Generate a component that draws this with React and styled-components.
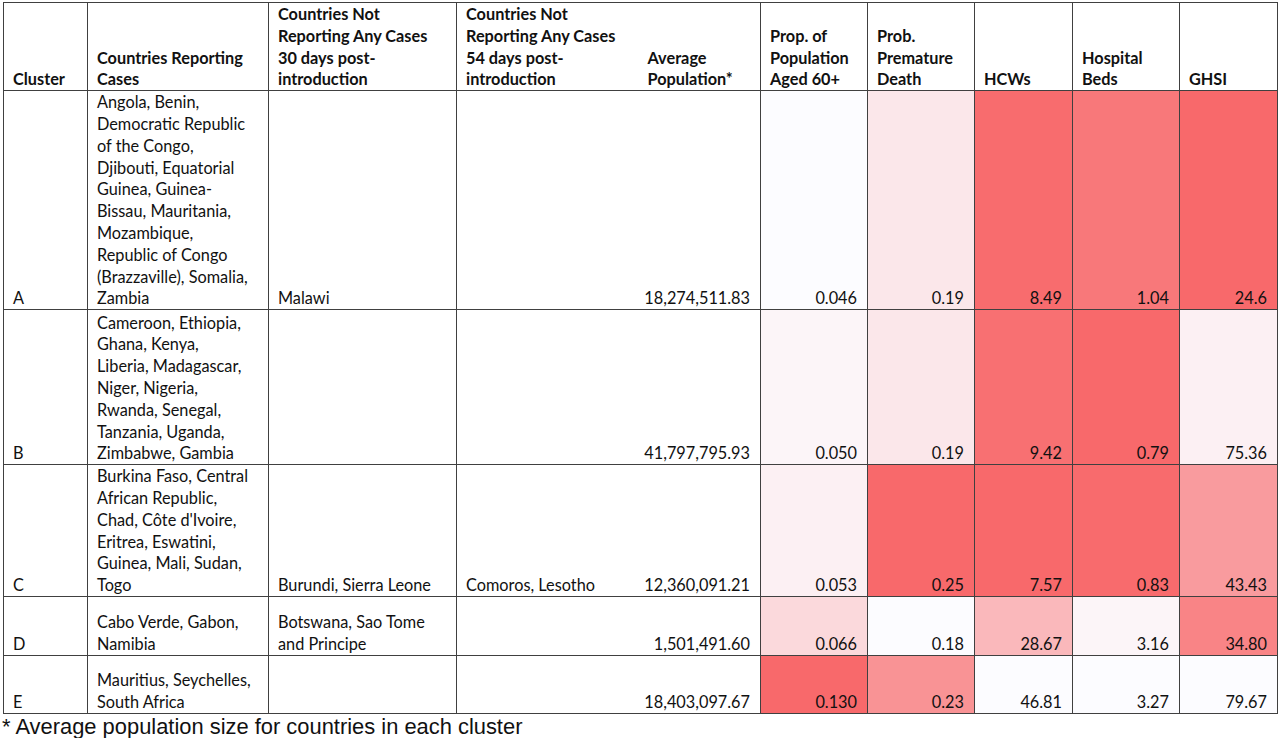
import styled, { createGlobalStyle } from "styled-components";

const GlobalStyle = createGlobalStyle`
  body {
    margin: 0;
    background: #ffffff;
  }
`

const Page = styled.div`
  padding: 2px 0 0 3px;
  width: 1280px;
  height: 738px;
  box-sizing: border-box;
  overflow: hidden;
`

const Table = styled.table`
  border-collapse: collapse;
  table-layout: fixed;
  width: 1275px;
  font-family: Lato, "Liberation Sans", sans-serif;
  font-size: 16.3px;
  line-height: 21.8px;
  color: #111;
`

const HeadCell = styled.th`
  border: 1px solid #404040;
  border-right: ${p => (p.$open ? "hidden" : "1px solid #404040")};
  vertical-align: bottom;
  text-align: left;
  font-weight: 700;
  padding: 0 4px 0 9px;
  white-space: nowrap;
  height: 87px;
  box-sizing: border-box;
`

const Cell = styled.td`
  border: 1px solid #404040;
  border-right: ${p => (p.$open ? "hidden" : "1px solid #404040")};
  vertical-align: bottom;
  text-align: ${p => (p.$num ? "right" : "left")};
  padding: ${p => (p.$num ? "0 10px 0 4px" : "0 4px 0 9px")};
  white-space: nowrap;
  background: ${p => p.$bg || "#ffffff"};
`

const Row = styled.tr`
  height: ${p => p.$h}px;
`

const Footnote = styled.div`
  font-family: "Liberation Sans", Arial, sans-serif;
  font-size: 21.9px;
  line-height: 25px;
  color: #111;
  margin-left: -1px;
`

const WHITE = [252, 252, 255]
const RED = [248, 105, 107]

const scale = (v, min, max, lowIsRed) => {
  let t = (v - min) / (max - min)
  if (lowIsRed) t = 1 - t
  const c = WHITE.map((w, i) => Math.round(w + (RED[i] - w) * t))
  return `rgb(${c[0]}, ${c[1]}, ${c[2]})`
}

const lines = (arr) =>
  arr.map((l, i) => (
    <span key={i}>
      {l}
      {i < arr.length - 1 && <br />}
    </span>
  ))

const headers = [
  { w: 84, text: ["Cluster"] },
  { w: 181, text: ["Countries Reporting", "Cases"] },
  { w: 188, text: ["Countries Not", "Reporting Any Cases", "30 days post-", "introduction"] },
  { w: 182, text: ["Countries Not", "Reporting Any Cases", "54 days post-", "introduction"], open: true },
  { w: 122, text: ["Average", "Population*"] },
  { w: 107, text: ["Prop. of", "Population", "Aged 60+"] },
  { w: 107, text: ["Prob.", "Premature", "Death"] },
  { w: 98, text: ["HCWs"] },
  { w: 107, text: ["Hospital", "Beds"] },
  { w: 98, text: ["GHSI"] },
]

const rows = [
  {
    h: 219,
    cluster: "A",
    reporting: [
      "Angola, Benin,",
      "Democratic Republic",
      "of the Congo,",
      "Djibouti, Equatorial",
      "Guinea, Guinea-",
      "Bissau, Mauritania,",
      "Mozambique,",
      "Republic of Congo",
      "(Brazzaville), Somalia,",
      "Zambia",
    ],
    d30: ["Malawi"],
    d54: [],
    pop: "18,274,511.83",
    prop: 0.046, prob: 0.19, hcw: 8.49, beds: 1.04, ghsi: 24.6,
    fmt: ["0.046", "0.19", "8.49", "1.04", "24.6"],
  },
  {
    h: 155,
    cluster: "B",
    reporting: [
      "Cameroon, Ethiopia,",
      "Ghana, Kenya,",
      "Liberia, Madagascar,",
      "Niger, Nigeria,",
      "Rwanda, Senegal,",
      "Tanzania, Uganda,",
      "Zimbabwe, Gambia",
    ],
    d30: [],
    d54: [],
    pop: "41,797,795.93",
    prop: 0.05, prob: 0.19, hcw: 9.42, beds: 0.79, ghsi: 75.36,
    fmt: ["0.050", "0.19", "9.42", "0.79", "75.36"],
  },
  {
    h: 131,
    cluster: "C",
    reporting: [
      "Burkina Faso, Central",
      "African Republic,",
      "Chad, Côte d'Ivoire,",
      "Eritrea, Eswatini,",
      "Guinea, Mali, Sudan,",
      "Togo",
    ],
    d30: ["Burundi, Sierra Leone"],
    d54: ["Comoros, Lesotho"],
    pop: "12,360,091.21",
    prop: 0.053, prob: 0.25, hcw: 7.57, beds: 0.83, ghsi: 43.43,
    fmt: ["0.053", "0.25", "7.57", "0.83", "43.43"],
  },
  {
    h: 59,
    cluster: "D",
    reporting: ["Cabo Verde, Gabon,", "Namibia"],
    d30: ["Botswana, Sao Tome", "and Principe"],
    d54: [],
    pop: "1,501,491.60",
    prop: 0.066, prob: 0.18, hcw: 28.67, beds: 3.16, ghsi: 34.8,
    fmt: ["0.066", "0.18", "28.67", "3.16", "34.80"],
  },
  {
    h: 58,
    cluster: "E",
    reporting: ["Mauritius, Seychelles,", "South Africa"],
    d30: [],
    d54: [],
    pop: "18,403,097.67",
    prop: 0.13, prob: 0.23, hcw: 46.81, beds: 3.27, ghsi: 79.67,
    fmt: ["0.130", "0.23", "46.81", "3.27", "79.67"],
  },
]

const range = (key) => {
  const vals = rows.map(r => r[key])
  return [Math.min(...vals), Math.max(...vals)]
}

const scaled = [
  { key: "prop", lowIsRed: false },
  { key: "prob", lowIsRed: false },
  { key: "hcw", lowIsRed: true },
  { key: "beds", lowIsRed: true },
  { key: "ghsi", lowIsRed: true },
].map(s => ({ ...s, range: range(s.key) }))

function App() {
  return (
    <Page>
      <GlobalStyle />
      <Table>
        <colgroup>
          {headers.map((h, i) => <col key={i} style={{ width: h.w }} />)}
        </colgroup>
        <thead>
          <tr>
            {headers.map((h, i) => (
              <HeadCell key={i} $open={h.open}>{lines(h.text)}</HeadCell>
            ))}
          </tr>
        </thead>
        <tbody>
          {rows.map(r => (
            <Row key={r.cluster} $h={r.h}>
              <Cell>{r.cluster}</Cell>
              <Cell>{lines(r.reporting)}</Cell>
              <Cell>{lines(r.d30)}</Cell>
              <Cell $open>{lines(r.d54)}</Cell>
              <Cell $num>{r.pop}</Cell>
              {scaled.map((s, i) => (
                <Cell
                  key={s.key}
                  $num
                  $bg={scale(r[s.key], s.range[0], s.range[1], s.lowIsRed)}
                >
                  {r.fmt[i]}
                </Cell>
              ))}
            </Row>
          ))}
        </tbody>
      </Table>
      <Footnote>* Average population size for countries in each cluster</Footnote>
    </Page>
  );
}

export default App;
